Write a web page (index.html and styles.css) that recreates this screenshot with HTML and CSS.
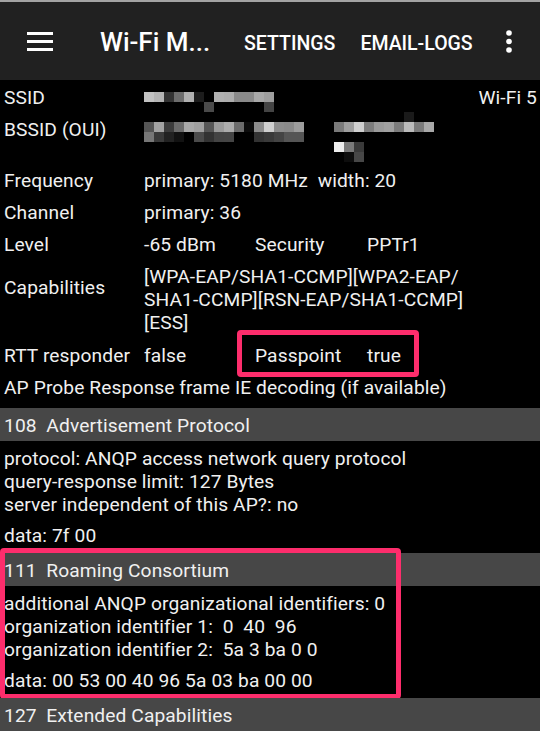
FILE: index.html
```html
<!DOCTYPE html>
<html>
<head>
<meta charset="utf-8">
<link rel="stylesheet" href="styles.css">
</head>
<body>
<div class="appbar">
  <svg class="menu" width="26" height="19" viewBox="0 0 26 19"><rect x="0" y="0" width="26" height="3" fill="#fff"/><rect x="0" y="8" width="26" height="3" fill="#fff"/><rect x="0" y="16" width="26" height="3" fill="#fff"/></svg>
  <span class="title">Wi-Fi M...</span>
  <span class="action">SETTINGS</span>
  <span class="action">EMAIL-LOGS</span>
  <svg class="overflow" width="6" height="23" viewBox="0 0 6 23"><circle cx="3" cy="3" r="2.8" fill="#fff"/><circle cx="3" cy="11.5" r="2.8" fill="#fff"/><circle cx="3" cy="20" r="2.8" fill="#fff"/></svg>
</div>

<div class="info">
  <div class="row">
    <span class="label">SSID</span>
    <span class="value">
      <svg class="blur" width="131" height="23" viewBox="0 0 131 23" shape-rendering="crispEdges">
        <rect x="0" y="6" width="10" height="10" fill="#c2c2c2"/>
        <rect x="10" y="6" width="10" height="10" fill="#b4b4b4"/>
        <rect x="20" y="6" width="10" height="10" fill="#333"/>
        <rect x="30" y="6" width="10" height="10" fill="#6d6d6d"/>
        <rect x="40" y="6" width="10" height="10" fill="#b0b0b0"/>
        <rect x="50" y="6" width="10" height="10" fill="#1c1c1c"/>
        <rect x="70" y="6" width="10" height="10" fill="#b0b0b0"/>
        <rect x="80" y="6" width="10" height="10" fill="#adadad"/>
        <rect x="90" y="6" width="10" height="10" fill="#8a8a8a"/>
        <rect x="100" y="6" width="10" height="10" fill="#8a8a8a"/>
        <rect x="110" y="6" width="10" height="10" fill="#a8a8a8"/>
        <rect x="120" y="6" width="10" height="10" fill="#9e9e9e"/>
        <rect x="60" y="16" width="10" height="10" fill="#4a4a4a"/>
        <rect x="120" y="16" width="10" height="10" fill="#444"/>
      </svg>
    </span>
    <span class="extra">Wi-Fi 5</span>
  </div>

  <div class="row row-tall">
    <span class="label">BSSID (OUI)</span>
    <span class="value">
      <svg class="blur" width="300" height="46" viewBox="0 0 300 46" shape-rendering="crispEdges">
        <rect x="0" y="4" width="10" height="10" fill="#555"/>
        <rect x="10" y="4" width="10" height="10" fill="#a3a3a3"/>
        <rect x="20" y="4" width="10" height="10" fill="#3c3c3c"/>
        <rect x="30" y="4" width="10" height="10" fill="#6b6b6b"/>
        <rect x="40" y="4" width="10" height="10" fill="#a8a8a8"/>
        <rect x="50" y="4" width="10" height="10" fill="#a0a0a0"/>
        <rect x="60" y="4" width="10" height="10" fill="#565656"/>
        <rect x="70" y="4" width="10" height="10" fill="#9a9a9a"/>
        <rect x="80" y="4" width="10" height="10" fill="#acacac"/>
        <rect x="90" y="4" width="10" height="10" fill="#6c6c6c"/>
        <rect x="100" y="4" width="10" height="10" fill="#0c0c0c"/>
        <rect x="110" y="4" width="10" height="10" fill="#8c8c8c"/>
        <rect x="120" y="4" width="10" height="10" fill="#cfcfcf"/>
        <rect x="130" y="4" width="10" height="10" fill="#8d8d8d"/>
        <rect x="140" y="4" width="10" height="10" fill="#8a8a8a"/>
        <rect x="150" y="4" width="10" height="10" fill="#9c9c9c"/>
        <rect x="0" y="14" width="10" height="10" fill="#777"/>
        <rect x="10" y="14" width="10" height="10" fill="#3a3a3a"/>
        <rect x="20" y="14" width="10" height="10" fill="#222"/>
        <rect x="30" y="14" width="10" height="10" fill="#121212"/>
        <rect x="50" y="14" width="10" height="10" fill="#4b4b4b"/>
        <rect x="60" y="14" width="10" height="10" fill="#333"/>
        <rect x="70" y="14" width="10" height="10" fill="#444"/>
        <rect x="80" y="14" width="10" height="10" fill="#454545"/>
        <rect x="110" y="14" width="10" height="10" fill="#333"/>
        <rect x="120" y="14" width="10" height="10" fill="#3a3a3a"/>
        <rect x="130" y="14" width="10" height="10" fill="#444"/>
        <rect x="140" y="14" width="10" height="10" fill="#555"/>
        <rect x="150" y="14" width="10" height="10" fill="#555"/>
        <rect x="260" y="-6" width="10" height="10" fill="#1a1a1a"/>
        <rect x="190" y="4" width="10" height="10" fill="#7a7a7a"/>
        <rect x="200" y="4" width="10" height="10" fill="#9e9e9e"/>
        <rect x="210" y="4" width="10" height="10" fill="#cfcfcf"/>
        <rect x="220" y="4" width="10" height="10" fill="#7d7d7d"/>
        <rect x="230" y="4" width="10" height="10" fill="#9a9a9a"/>
        <rect x="240" y="4" width="10" height="10" fill="#a0a0a0"/>
        <rect x="250" y="4" width="10" height="10" fill="#7c7c7c"/>
        <rect x="260" y="4" width="10" height="10" fill="#bbbbbb"/>
        <rect x="270" y="4" width="10" height="10" fill="#7a7a7a"/>
        <rect x="280" y="4" width="10" height="10" fill="#a8a8a8"/>
        <rect x="190" y="24" width="10" height="10" fill="#eeeeee"/>
        <rect x="200" y="24" width="10" height="10" fill="#7a7a7a"/>
        <rect x="210" y="24" width="10" height="10" fill="#3a3a3a"/>
        <rect x="200" y="34" width="10" height="10" fill="#0d0d0d"/>
        <rect x="210" y="34" width="10" height="10" fill="#474747"/>
      </svg>
    </span>
  </div>

  <div class="row">
    <span class="label">Frequency</span>
    <span class="value pre">primary: 5180 MHz  width: 20</span>
  </div>
  <div class="row">
    <span class="label">Channel</span>
    <span class="value">primary: 36</span>
  </div>
  <div class="row">
    <span class="label">Level</span>
    <span class="value triple"><span>-65 dBm</span><span>Security</span><span>PPTr1</span></span>
  </div>
  <div class="row row-caps">
    <span class="label label-caps">Capabilities</span>
    <span class="value">[WPA-EAP/SHA1-CCMP][WPA2-EAP/<br>SHA1-CCMP][RSN-EAP/SHA1-CCMP]<br>[ESS]</span>
  </div>
  <div class="row row-rtt">
    <span class="label">RTT responder</span>
    <span class="value triple"><span>false</span><span>Passpoint</span><span>true</span></span>
    <span class="mark mark-passpoint"></span>
  </div>
  <div class="row">
    <span class="full">AP Probe Response frame IE decoding (if available)</span>
  </div>
</div>

<div class="section">
  <div class="bar pre">108  Advertisement Protocol</div>
  <div class="body">
    <div>protocol: ANQP access network query protocol</div>
    <div>query-response limit: 127 Bytes</div>
    <div>server independent of this AP?: no</div>
    <div class="data">data: 7f 00</div>
  </div>
</div>

<div class="section section-marked">
  <div class="bar pre">111  Roaming Consortium</div>
  <div class="body">
    <div>additional ANQP organizational identifiers: 0</div>
    <div class="pre">organization identifier 1:  0  40  96</div>
    <div class="pre">organization identifier 2:  5a 3 ba 0 0</div>
    <div class="data">data: 00 53 00 40 96 5a 03 ba 00 00</div>
  </div>
  <span class="mark mark-roaming"></span>
</div>

<div class="section">
  <div class="bar pre">127  Extended Capabilities</div>
</div>
</body>
</html>
```

FILE: styles.css
```css
html, body {
  margin: 0;
  padding: 0;
}

body {
  width: 540px;
  height: 731px;
  overflow: hidden;
  background: #000;
  color: #f0f0f0;
  font-family: Roboto, "Noto Sans", "Liberation Sans", sans-serif;
  font-size: 19.2px;
  letter-spacing: 0.1px;
  line-height: 23px;
}

.pre {
  white-space: pre;
}

/* App bar */
.appbar {
  height: 78px;
  border-top: 2px solid #a3a3a3;
  background: #212121;
  display: flex;
  align-items: center;
  color: #fff;
  letter-spacing: 0;
}

.menu {
  margin-left: 27px;
  flex: 0 0 auto;
}

.title {
  margin-left: 47px;
  flex: 0 0 144px;
  font-size: 26px;
  font-weight: 500;
  padding-top: 2px;
  white-space: nowrap;
}

.action {
  font-size: 19.5px;
  font-weight: 500;
  padding-top: 4px;
  margin-right: 25px;
  white-space: nowrap;
}

.overflow {
  margin-left: auto;
  margin-right: 28px;
  flex: 0 0 auto;
}

/* Info table */
.info {
  padding-top: 1px;
}

.row {
  position: relative;
  display: grid;
  grid-template-columns: 140px 1fr auto;
  padding: 5px 3px 4px 4px;
}

.row-tall {
  padding-bottom: 0;
}

.row-caps {
  padding-bottom: 5px;
}

.label {
  white-space: nowrap;
}

.label-caps {
  padding-top: 11px;
}

.value {
  display: block;
}

.blur {
  display: block;
  overflow: visible;
}

.extra {
  text-align: right;
}

.triple {
  display: grid;
  grid-template-columns: 111px 112px 1fr;
  white-space: nowrap;
}

.full {
  grid-column: 1 / -1;
  white-space: nowrap;
}

/* Sections */
.info + .section {
  margin-top: 5px;
}

.section {
  position: relative;
}

.bar {
  background: #474747;
  padding: 6px 4px 4px 4px;
}

.body {
  padding: 6px 4px 6px 4px;
  white-space: nowrap;
}

.data {
  margin-top: 8px;
}

/* Highlight frames */
.mark {
  position: absolute;
  border: 5px solid #fd2d6c;
  border-radius: 4px;
  box-sizing: border-box;
  pointer-events: none;
}

.mark-passpoint {
  left: 237px;
  top: -9px;
  width: 182px;
  height: 47px;
}

.mark-roaming {
  left: 0;
  top: -5px;
  width: 401px;
  height: 151px;
}
```
